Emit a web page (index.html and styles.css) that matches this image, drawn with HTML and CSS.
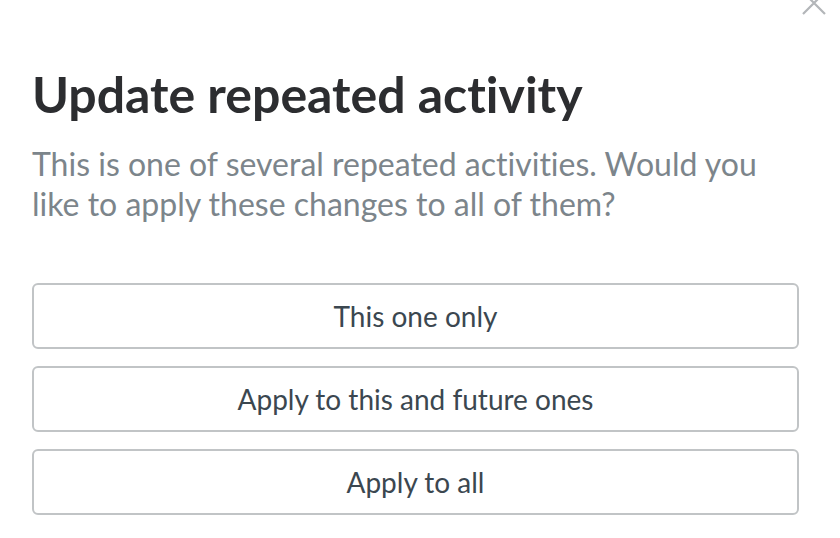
FILE: index.html
```html
<!DOCTYPE html>
<html>
<head>
<meta charset="utf-8">
<link rel="stylesheet" href="styles.css">
</head>
<body>
<div class="modal">
  <button class="close" aria-label="Close">
    <svg width="24" height="24" viewBox="0 0 24 24"><path d="M1 1 L23 23 M23 1 L1 23" stroke="#b3b6b9" stroke-width="2.2" fill="none"/></svg>
  </button>
  <h1 class="title">Update repeated activity</h1>
  <p class="desc">This is one of several repeated activities. Would you like to apply these changes to all of them?</p>
  <div class="actions">
    <button class="option">This one only</button>
    <button class="option">Apply to this and future ones</button>
    <button class="option">Apply to all</button>
  </div>
</div>
</body>
</html>
```
FILE: styles.css
```css
html, body {
  margin: 0;
  padding: 0;
  background: #ffffff;
}
body {
  font-family: Lato, "Open Sans", sans-serif;
  font-variant-ligatures: none;
  width: 840px;
  height: 538px;
  overflow: hidden;
}
.modal {
  position: relative;
  padding: 64px 41px 0 32px;
}
.close {
  position: absolute;
  top: -9px;
  right: 14px;
  border: 0;
  background: none;
  padding: 0;
  width: 24px;
  height: 24px;
}
.close svg { display: block; }
.title {
  margin: 0;
  font-size: 50px;
  font-weight: 700;
  color: #2c2d30;
  line-height: 60px;
  letter-spacing: 0;
}
.desc {
  margin: 20px 0 0;
  font-size: 32px;
  line-height: 40px;
  color: #7c858b;
  max-width: 740px;
}
.actions {
  margin-top: 59px;
  display: flex;
  flex-direction: column;
  gap: 17px;
}
.option {
  height: 66px;
  border: 2px solid #c1c4c6;
  border-radius: 6px;
  background: #fff;
  font-family: Lato, sans-serif;
  font-variant-ligatures: none;
  font-size: 28px;
  color: #3b4750;
  padding: 0;
}
```
